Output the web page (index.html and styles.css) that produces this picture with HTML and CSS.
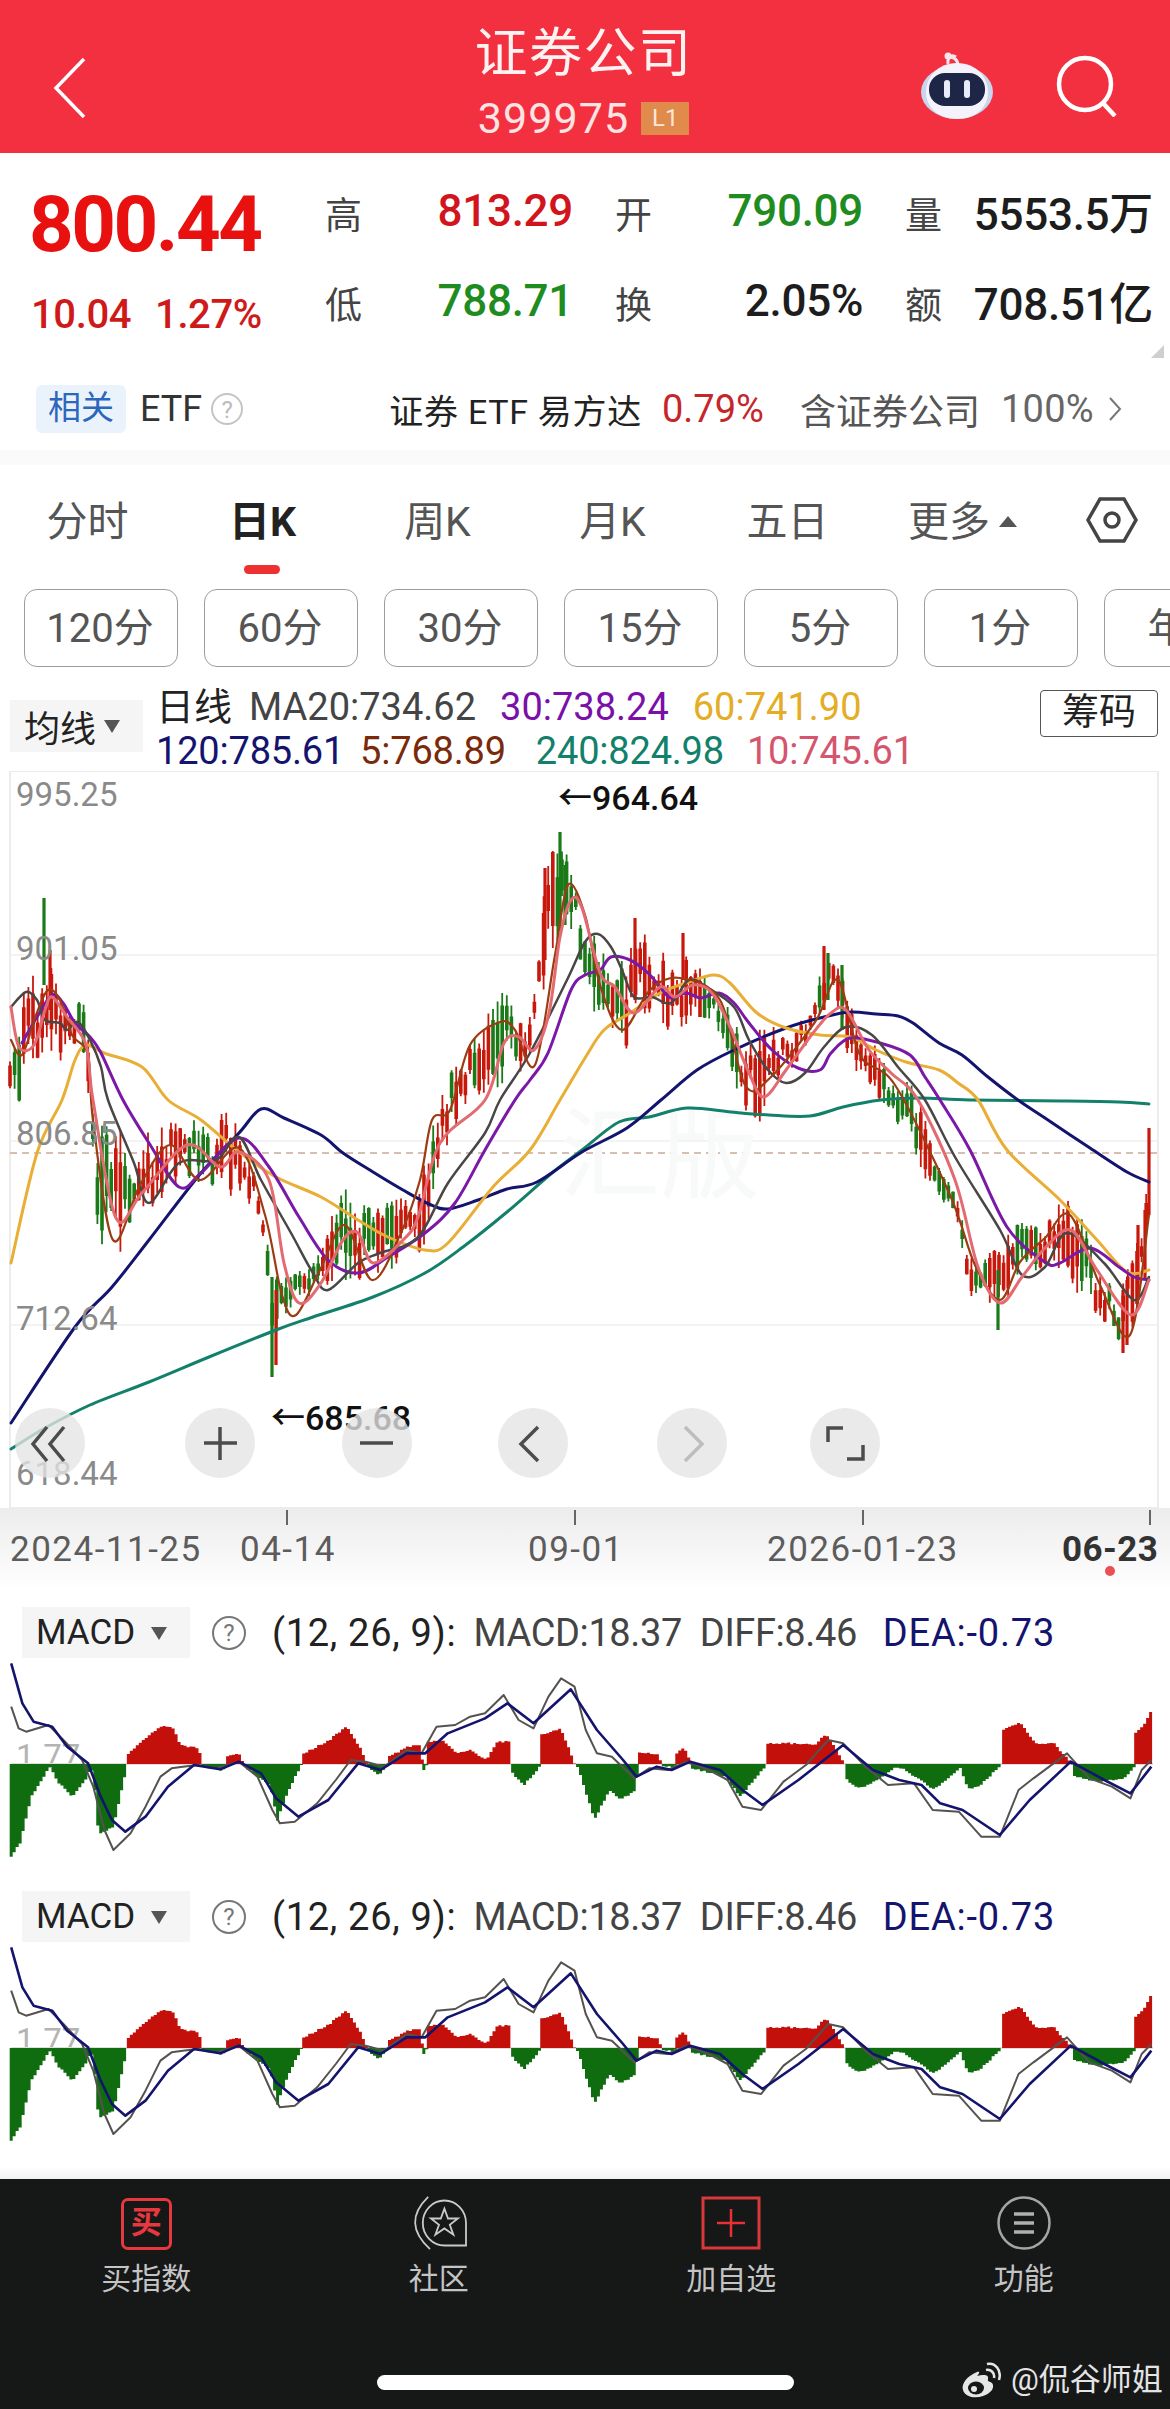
FILE: index.html
```html
<!DOCTYPE html>
<html lang="zh">
<head>
<meta charset="utf-8">
<title>证券公司</title>
<link rel="stylesheet" href="styles.css">
</head>
<body>
<div class="page">
  <header class="topbar">
    <div class="topbar-left">
      <svg class="back-icon" viewBox="0 0 34 62"><path d="M31 2 L3 31 L31 60"/></svg>
    </div>
    <div class="topbar-title">
      <div class="title">证券公司</div>
      <div class="code-row"><span class="code">399975</span><span class="badge">L1</span></div>
    </div>
    <div class="topbar-right">
      <svg class="robot-icon" viewBox="0 0 72 68">
        <path class="robot-ant" d="M27 12 C26 5 31 2 35 5"/>
        <circle class="robot-dot" cx="27" cy="4" r="3.5"/>
        <path class="robot-ant" d="M27 6 C33 4 37 8 37 14"/>
        <ellipse class="robot-ear" cx="36" cy="40" rx="36" ry="27"/>
        <path class="robot-head" d="M36 11 C56 11 67 26 67 40 C67 56 54 67 36 67 C18 67 5 56 5 40 C5 26 16 11 36 11 Z"/>
        <rect class="robot-face" x="8" y="21" width="56" height="33" rx="16"/>
        <rect class="robot-eye" x="23" y="28" width="6" height="18" rx="3"/>
        <rect class="robot-eye" x="43" y="28" width="6" height="18" rx="3"/>
      </svg>
      <svg class="search-icon" viewBox="0 0 62 62"><circle cx="29" cy="29" r="26"/><path d="M46 47 L59 61"/></svg>
    </div>
  </header>

  <section class="quote">
    <div class="quote-main">
      <div class="price">800.44</div>
      <div class="change"><span>10.04</span><span>1.27%</span></div>
    </div>
    <div class="stats">
      <div class="stat"><span class="stat-label">高</span><span class="stat-value up">813.29</span></div>
      <div class="stat"><span class="stat-label">开</span><span class="stat-value down">790.09</span></div>
      <div class="stat"><span class="stat-label">量</span><span class="stat-value">5553.5万</span></div>
      <div class="stat"><span class="stat-label">低</span><span class="stat-value down">788.71</span></div>
      <div class="stat"><span class="stat-label">换</span><span class="stat-value">2.05%</span></div>
      <div class="stat"><span class="stat-label">额</span><span class="stat-value">708.51亿</span></div>
    </div>
    <span class="corner-mark"></span>
    <div class="etf-row">
      <div class="etf-left">
        <span class="etf-chip">相关</span>
        <span class="etf-name">ETF</span>
        <span class="help-dot light">?</span>
      </div>
      <div class="etf-right">
        <span class="etf-fund">证券 ETF 易方达</span>
        <span class="etf-rate">0.79%</span>
        <span class="etf-hold">含证券公司</span>
        <span class="etf-pct">100%</span>
        <svg class="etf-arrow" viewBox="0 0 14 26"><path d="M2 2 L12 13 L2 24"/></svg>
      </div>
    </div>
  </section>

  <div class="divider"></div>

  <nav class="tabs">
    <span class="tab">分时</span>
    <span class="tab tab-active">日K</span>
    <span class="tab">周K</span>
    <span class="tab">月K</span>
    <span class="tab">五日</span>
    <span class="tab">更多<i class="tab-caret"></i></span>
    <svg class="hex-icon" viewBox="0 0 52 46"><path d="M14 2 H38 L50 23 L38 44 H14 L2 23 Z"/><circle cx="26" cy="23" r="7"/></svg>
  </nav>

  <div class="periods">
    <span class="period">120分</span>
    <span class="period">60分</span>
    <span class="period">30分</span>
    <span class="period">15分</span>
    <span class="period">5分</span>
    <span class="period">1分</span>
    <span class="period">年K</span>
  </div>

  <div class="legend">
    <div class="ma-chip"><span>均线</span><i class="caret-down"></i></div>
    <div class="legend-lines">
      <div class="legend-row legend-row-top"><span class="legend-head">日线</span><span class="c-gray">MA20:734.62</span><span class="c-purple">30:738.24</span><span class="c-orange">60:741.90</span></div>
      <div class="legend-row"><span class="c-navy">120:785.61</span><span class="c-brown legend-five">5:768.89</span><span class="c-teal">240:824.98</span><span class="c-pink">10:745.61</span></div>
    </div>
    <span class="chips-btn">筹码</span>
  </div>

  <svg class="chart" viewBox="0 771 1170 819">
    <defs>
      <linearGradient id="stripFade" x1="0" y1="0" x2="0" y2="1">
        <stop offset="0" stop-color="#ececec"/>
        <stop offset="1" stop-color="#ffffff"/>
      </linearGradient>
    </defs>
    <rect class="axis-strip" x="0" y="1508" width="1170" height="82"/>
    <rect class="frame" x="10" y="771" width="1148" height="737"/>
    <path class="grid" d="M10 955 H1158 M10 1141 H1158 M10 1325 H1158"/>
    <path class="grid-dash" d="M10 1153 H1158"/>
    <text class="watermark" x="560" y="1190">汇版</text>

    <g id="candles"></g>

    <polyline class="ln ma240" points="11,1449 45,1428 90,1405 149,1382 209,1357 276,1330 313,1317 373,1297 425,1273 463,1247 507,1212 552,1173 582,1150 619,1122 649,1117 687,1108 731,1112 769,1115 810,1116 843,1107 881,1100 920,1098 970,1100 1060,1101 1119,1102 1149,1104"/>
    <polyline class="ln ma120" points="11,1423 75,1327 112,1287 149,1240 201,1173 239,1133 261,1109 284,1118 321,1135 343,1153 373,1172 403,1190 429,1204 448,1209 478,1200 507,1189 537,1182 582,1152 627,1128 661,1100 697,1070 734,1050 786,1028 824,1017 850,1012 876,1014 898,1016 913,1023 939,1043 962,1055 988,1077 1018,1100 1045,1118 1090,1148 1127,1172 1149,1182"/>
    <polyline class="ln ma60" points="11,1263 37,1153 62,1100 75,1060 86,1045 104,1053 142,1067 168,1100 201,1120 239,1152 276,1177 321,1197 358,1220 388,1237 425,1250 448,1243 493,1187 530,1150 560,1100 585,1058 604,1030 630,1013 660,993 689,982 714,975 730,983 757,1013 786,1028 820,1035 850,1037 876,1050 906,1062 939,1070 958,1083 978,1100 1007,1150 1060,1200 1097,1240 1127,1272 1149,1270"/>
    <polyline class="ln ma30" points="22,1043 37,1017 52,995 63,1003 75,1023 90,1037 101,1053 123,1100 149,1143 179,1187 201,1173 239,1138 269,1167 299,1217 328,1260 358,1273 388,1257 425,1233 455,1203 485,1150 515,1100 530,1080 548,1053 571,990 585,975 600,970 611,957 630,960 648,973 660,987 671,998 686,993 701,998 719,993 734,1003 749,1023 772,1050 798,1068 820,1070 831,1053 850,1038 880,1043 910,1055 925,1077 940,1100 970,1150 1007,1227 1045,1262 1060,1263 1090,1248 1119,1267 1134,1277 1149,1280"/>
    <polyline class="ln ma20" points="11,1007 26,992 37,1000 45,1020 60,1023 67,1030 78,1022 90,1040 101,1067 108,1100 134,1163 149,1203 179,1163 216,1160 239,1137 261,1180 291,1233 313,1273 328,1290 358,1263 380,1253 418,1237 448,1183 485,1133 500,1100 530,1053 567,980 585,942 598,934 611,947 622,970 634,997 652,997 671,1003 689,980 708,988 734,1007 749,1040 768,1070 786,1083 805,1073 824,1047 846,1027 872,1035 898,1067 925,1100 955,1157 1000,1230 1022,1275 1045,1267 1067,1233 1104,1263 1134,1300 1149,1277"/>
    <polyline class="ln ma5" points="11,1040 22,1055 36,1015 48,990 60,1000 72,1035 88,1055 93,1120 113,1240 140,1185 170,1145 200,1180 239,1148 265,1215 282,1295 296,1315 320,1270 345,1225 372,1280 400,1235 420,1180 432,1120 450,1110 470,1045 500,1022 515,1030 535,1065 555,955 568,885 585,915 600,985 622,1030 650,990 680,978 720,1000 745,1085 770,1078 815,1022 838,980 860,1055 895,1085 950,1195 975,1265 1000,1300 1020,1262 1045,1238 1070,1215 1100,1285 1130,1335 1149,1215"/>
    <polyline class="ln ma10" points="11,1007 19,1047 34,1045 45,1010 52,997 67,1017 86,1045 93,1100 116,1218 142,1193 187,1145 220,1167 239,1152 269,1180 284,1263 299,1303 321,1283 343,1240 358,1233 373,1263 403,1240 418,1217 440,1143 485,1100 504,1043 519,1037 534,1050 549,1013 560,937 571,900 582,908 600,973 615,987 634,1013 660,987 675,997 693,985 712,993 730,1027 749,1073 764,1097 786,1070 813,1033 831,1013 846,1010 869,1050 891,1073 918,1100 955,1180 978,1267 1000,1303 1022,1277 1045,1248 1071,1230 1097,1270 1131,1315 1149,1280"/>

    <text class="price-tick" x="16" y="806">995.25</text>
    <text class="price-tick" x="16" y="960">901.05</text>
    <text class="price-tick" x="16" y="1145">806.85</text>
    <text class="price-tick" x="16" y="1330">712.64</text>
    <text class="price-tick" x="16" y="1485">618.44</text>
    <text class="extreme" x="558" y="810">←964.64</text>
    <text class="extreme" x="271" y="1430">←685.68</text>

    <g class="nav-btns">
      <circle cx="50" cy="1443" r="35"/>
      <circle cx="220" cy="1443" r="35"/>
      <circle cx="377" cy="1443" r="35"/>
      <circle cx="533" cy="1443" r="35"/>
      <circle cx="692" cy="1443" r="35"/>
      <circle cx="845" cy="1443" r="35"/>
    </g>
    <path class="nav-glyph" d="M47 1427 L33 1444 L47 1461 M64 1427 L50 1444 L64 1461"/>
    <path class="nav-glyph" d="M204 1443 H237 M220 1427 V1460"/>
    <path class="nav-glyph" d="M360 1443 H393"/>
    <path class="nav-glyph" d="M538 1427 L521 1444 L538 1461"/>
    <path class="nav-glyph off" d="M685 1427 L702 1444 L685 1461"/>
    <path class="nav-glyph" d="M843 1428 H828 V1442 M847 1459 H863 V1445"/>

    <path class="tick" d="M287 1510 V1525 M575 1510 V1525 M863 1510 V1525 M1150 1510 V1525"/>
    <text class="date" x="10" y="1561">2024-11-25</text>
    <text class="date" x="240" y="1561">04-14</text>
    <text class="date" x="528" y="1561">09-01</text>
    <text class="date" x="767" y="1561">2026-01-23</text>
    <text class="date date-now" x="1062" y="1561">06-23</text>
    <circle class="now-dot" cx="1110" cy="1571" r="5"/>
  </svg>

  <section class="macd">
    <div class="macd-head">
      <div class="macd-chip"><span>MACD</span><i class="caret-down small"></i></div>
      <span class="help-dot">?</span>
      <span class="macd-args">(12, 26, 9):</span>
      <span class="macd-val c-gray">MACD:18.37</span>
      <span class="macd-val c-gray">DIFF:8.46</span>
      <span class="macd-val macd-dea-text c-navy">DEA:-0.73</span>
    </div>
    <span class="macd-zero-label">1.77</span>
    <svg class="macd-plot" viewBox="0 204 1568 648" preserveAspectRatio="none">
      <g id="macd-art">
        <path class="macd-zero" d="M15 522 H1545"/>
        <g id="macd-hist"></g>
        <polyline class="macd-diff" points="15,350 25,415 35,425 65,405 85,450 110,510 125,590 140,720 152,780 175,730 195,650 215,560 230,535 245,530 265,525 290,535 320,515 345,560 365,660 375,700 395,695 425,640 450,570 470,510 490,515 515,530 545,480 565,490 585,410 610,405 630,380 650,370 675,315 695,390 715,415 735,320 752,265 770,290 785,420 800,490 820,500 850,565 870,535 895,540 920,515 950,540 975,570 995,650 1020,660 1050,575 1080,525 1110,450 1130,460 1160,530 1190,585 1225,580 1250,660 1285,665 1315,740 1340,740 1365,600 1385,565 1430,490 1460,565 1490,590 1515,625 1530,540 1543,510"/>
        <polyline class="macd-dea" points="15,220 30,340 45,395 70,410 90,470 118,520 135,620 150,690 168,725 195,680 225,590 260,525 295,538 320,515 350,550 370,625 400,680 440,630 480,520 510,540 545,490 570,490 600,430 650,385 680,340 715,400 765,298 800,420 835,510 853,560 880,530 900,540 925,515 965,540 995,600 1022,645 1070,570 1130,465 1170,540 1205,570 1235,585 1260,640 1290,660 1340,735 1380,630 1435,515 1480,570 1515,610 1543,530"/>
      </g>
    </svg>
  </section>

  <section class="macd">
    <div class="macd-head">
      <div class="macd-chip"><span>MACD</span><i class="caret-down small"></i></div>
      <span class="help-dot">?</span>
      <span class="macd-args">(12, 26, 9):</span>
      <span class="macd-val c-gray">MACD:18.37</span>
      <span class="macd-val c-gray">DIFF:8.46</span>
      <span class="macd-val macd-dea-text c-navy">DEA:-0.73</span>
    </div>
    <span class="macd-zero-label">1.77</span>
    <svg class="macd-plot" viewBox="0 204 1568 648" preserveAspectRatio="none">
      <use href="#macd-art"/>
    </svg>
  </section>

  <div class="bottom-gap"></div>

  <footer class="bottombar">
    <div class="actions">
      <div class="action">
        <span class="buy-icon">买</span>
        <span class="action-label">买指数</span>
      </div>
      <div class="action">
        <svg class="action-icon" viewBox="0 0 64 60"><path class="community" d="M62 55 H38 A24 25 0 1 1 62 30 Z"/><path class="community" d="M20 1 Q-10 30 22 59"/><path class="community" d="M38 14 L42 25 L53 25 L44 32 L48 43 L38 36 L28 43 L32 32 L23 25 L34 25 Z"/></svg>
        <span class="action-label">社区</span>
      </div>
      <div class="action">
        <svg class="action-icon" viewBox="0 0 60 54"><rect class="add-box" x="2" y="2" width="56" height="50"/><path class="add-plus" d="M16 27 H44 M30 13 V41"/></svg>
        <span class="action-label">加自选</span>
      </div>
      <div class="action">
        <svg class="action-icon" viewBox="0 0 56 54"><circle class="menu-ring" cx="28" cy="27" r="25.5"/><path class="menu-lines" d="M18 18 H38 M18 27 H38 M18 36 H38"/></svg>
        <span class="action-label">功能</span>
      </div>
    </div>
    <div class="home-bar"></div>
    <div class="weibo">
      <svg class="weibo-logo" viewBox="0 0 40 38">
        <path class="wb-body" d="M16 11 C6 15 0 23 2 29 C4 36 14 38 22 35 C31 32 34 26 31 22 C29 20 26 21 27 18 C28 14 24 13 16 15 C19 12 19 10 16 11 Z"/>
        <ellipse class="wb-eye" cx="15" cy="27" rx="8" ry="6.5"/>
        <circle class="wb-pupil" cx="13" cy="28" r="3"/>
        <path class="wb-wave" d="M25 9 C30 8 34 12 33 17 M26 3 C34 1 41 9 38 19"/>
      </svg>
      <span>@侃谷师姐</span>
    </div>
  </footer>
</div>
<script src="chart.js"></script>
</body>
</html>
```

FILE: styles.css
```css
* { box-sizing: border-box; }
html, body { margin: 0; padding: 0; background: #fff; }
body { font-family: Roboto, "Noto Sans CJK SC", sans-serif; color: #222; }
i { display: inline-block; font-style: normal; }
.page { width: 1170px; height: 2409px; overflow: hidden; }

/* top bar */
.topbar { height: 153px; background: #f2303f; display: grid; grid-template-columns: 1fr auto 1fr; color: #fff; }
.topbar-left { padding: 57px 0 0 53px; }
.back-icon { width: 34px; height: 62px; display: block; fill: none; stroke: #fff; stroke-width: 3.5; }
.topbar-title { display: flex; flex-direction: column; align-items: center; padding-top: 19px; margin-left: -3px; }
.title { font-size: 53px; line-height: 70px; height: 70px; letter-spacing: 1.5px; color: #fdf2f2; }
.code-row { display: flex; align-items: center; gap: 12px; height: 52px; margin-top: 3px; }
.code { font-size: 43px; letter-spacing: 1.1px; color: #fbe4e4; }
.badge { width: 48px; height: 33px; background: #e08b4b; color: #fde8d8; font-size: 24px; display: flex; align-items: center; justify-content: center; }
.topbar-right { display: flex; justify-content: flex-end; align-items: flex-start; gap: 63px; padding: 52px 52px 0 0; }
.robot-icon { width: 72px; height: 68px; display: block; }
.robot-ant { fill: none; stroke: #f5e6ee; stroke-width: 3; }
.robot-dot { fill: #f5e6ee; }
.robot-ear { fill: #c9d4ef; }
.robot-head { fill: #f4f3fb; }
.robot-face { fill: #1d2647; }
.robot-eye { fill: #e8ecfa; }
.search-icon { width: 62px; height: 62px; display: block; fill: none; stroke: #fff; stroke-width: 4.5; margin-top: 3px; }

/* quote */
.quote { height: 297px; position: relative; padding: 0 0 0 29px; display: grid; grid-template-columns: 296px 1fr; grid-template-rows: 192px 1fr; }
.quote-main { padding-top: 32px; }
.price { font-size: 78px; line-height: 80px; font-weight: 700; letter-spacing: -2.5px; color: #e8110f; }
.change { display: flex; justify-content: flex-start; gap: 24px; font-size: 40px; line-height: 46px; margin-top: 27px; letter-spacing: -.4px; font-weight: 500; color: #cf1a1a; padding-left: 2px; }
.stats { display: grid; grid-template-columns: 248px 248px 248px; column-gap: 42px; grid-auto-rows: 90px; padding-top: 34px; }
.stat { display: flex; justify-content: space-between; align-items: center; height: 48px; }
.stat-label { font-size: 37px; color: #444; padding-top: 3px; }
.stat-value { font-size: 44px; font-weight: 500; letter-spacing: -.3px; color: #1d1d1d; white-space: nowrap; }
.up { color: #d2141c; }
.down { color: #1f8c1f; }
.corner-mark { position: absolute; right: 6px; top: 192px; width: 0; height: 0; border-left: 13px solid transparent; border-bottom: 13px solid #cfcfcf; }
.etf-row { grid-column: 1 / 3; display: flex; justify-content: space-between; align-items: flex-start; padding: 40px 48px 0 7px; }
.etf-left { display: flex; align-items: center; gap: 14px; height: 48px; }
.etf-chip { width: 90px; height: 48px; background: #eaf2fb; border-radius: 6px; color: #2c66bd; font-size: 33px; text-align: center; line-height: 46px; }
.etf-name { font-size: 36px; color: #333; }
.help-dot { width: 34px; height: 34px; border-radius: 50%; border: 2px solid #777; color: #777; font-size: 24px; line-height: 30px; text-align: center; flex: none; }
.help-dot.light { border-color: #c4c4c4; color: #bbb; width: 32px; height: 32px; margin-left: -5px; }
.etf-right { display: flex; align-items: center; height: 48px; font-size: 36px; white-space: nowrap; }
.etf-fund { color: #222; font-size: 34px; margin-right: 20px; letter-spacing: .7px; }
.etf-rate { color: #c6262a; font-size: 38px; margin-right: 36px; }
.etf-hold { color: #555; margin-right: 21px; }
.etf-pct { color: #666; font-size: 38px; margin-right: 14px; letter-spacing: .3px; }
.etf-arrow { width: 14px; height: 26px; fill: none; stroke: #777; stroke-width: 2; }

.divider { height: 15px; background: #fafafa; }

/* tabs */
.tabs { height: 115px; display: grid; grid-template-columns: repeat(6, 175px) 1fr; align-items: start; padding-top: 30px; }
.tab { position: relative; text-align: center; font-size: 41px; line-height: 54px; color: #555; white-space: nowrap; }
.tab-active { font-weight: 700; color: #222; }
.tab-active::after { content: ""; position: absolute; left: 69px; top: 70px; width: 36px; height: 9px; border-radius: 5px; background: #ee3030; }
.tab-caret { width: 0; height: 0; border-left: 9px solid transparent; border-right: 9px solid transparent; border-bottom: 11px solid #555; margin: 0 0 8px 9px; vertical-align: middle; }
.hex-icon { width: 52px; height: 46px; justify-self: center; margin-top: 2px; margin-left: 4px; fill: none; stroke: #444; stroke-width: 3.5; }

/* period buttons */
.periods { margin-top: 9px; height: 78px; padding-left: 24px; display: flex; gap: 26px; overflow: hidden; }
.period { flex: 0 0 154px; height: 78px; border: 1.5px solid #9c9c9c; border-radius: 13px; text-align: center; line-height: 77px; font-size: 40px; color: #555; padding-right: 2px; white-space: nowrap; }

/* legend */
.legend { height: 104px; display: flex; align-items: flex-start; padding: 20px 12px 0 10px; }
.ma-chip { width: 133px; height: 52px; margin-top: 13px; background: #f5f5f5; display: flex; align-items: center; gap: 8px; padding-left: 14px; font-size: 36px; color: #222; }
.caret-down { width: 0; height: 0; border-left: 8px solid transparent; border-right: 8px solid transparent; border-top: 13px solid #555; }
.legend-lines { flex: 1; margin-left: 13px; font-size: 38px; line-height: 44px; margin-top: -2px; letter-spacing: -.2px; }
.legend-row { display: flex; gap: 23px; height: 44px; white-space: nowrap; }
.legend-row-top { gap: 24px; letter-spacing: 0; }
.legend-head { color: #222; margin-right: -7px; }
.legend-five { margin-left: -7px; margin-right: 7px; }
.c-gray { color: #444; }
.c-purple { color: #7a10a8; }
.c-orange { color: #e5ac25; }
.c-navy { color: #14146e; }
.c-brown { color: #7a2a0a; }
.c-teal { color: #12806a; }
.c-pink { color: #d4566e; }
.chips-btn { width: 118px; height: 47px; margin-top: 3px; border: 1.5px solid #555; border-radius: 4px; text-align: center; font-size: 37px; line-height: 43px; color: #222; }

/* main chart */
.chart { display: block; width: 1170px; height: 819px; }
.axis-strip { fill: url(#stripFade); }
.frame { fill: #fff; stroke: #ececec; stroke-width: 2; }
.grid { fill: none; stroke: #f0f0f0; stroke-width: 1.5; }
.grid-dash { fill: none; stroke: #c9a99a; stroke-width: 1.5; stroke-dasharray: 7 5; }
.watermark { font-size: 100px; fill: #f8f9f9; }
.ln { fill: none; stroke-linejoin: round; stroke-linecap: round; stroke-width: 3; }
.ma240 { stroke: #12806a; }
.ma120 { stroke: #14146e; }
.ma60 { stroke: #e8ae35; }
.ma30 { stroke: #7a18a8; }
.ma20 { stroke: #4a4646; stroke-width: 2.5; }
.ma5 { stroke: #9c3c12; stroke-width: 2.2; }
.ma10 { stroke: #e46a72; }
.price-tick { font-size: 33px; fill: #8a8a8a; }
.extreme { font-size: 34px; font-weight: 500; fill: #111; }
.nav-btns circle { fill: #e4e4e4; fill-opacity: .78; }
.nav-glyph { fill: none; stroke: #4c4c4c; stroke-width: 3.5; }
.nav-glyph.off { stroke: #bdbdbd; }
.tick { fill: none; stroke: #666; stroke-width: 2; }
.date { font-size: 35px; fill: #5c5c5c; letter-spacing: 1.5px; }
.date-now { fill: #333; font-weight: 700; letter-spacing: .4px; }
.now-dot { fill: #ea4f55; }

/* macd panels */
.macd { position: relative; height: 284px; }
.macd-head { height: 68px; display: flex; align-items: center; padding: 17px 0 0 22px; font-size: 38px; white-space: nowrap; }
.macd-chip { width: 168px; height: 51px; background: #f5f5f5; display: flex; align-items: center; gap: 16px; padding-left: 14px; color: #222; font-size: 35px; margin-right: 22px; }
.caret-down.small { margin-top: 2px; }
.macd-args { color: #222; margin-left: 26px; margin-right: 17px; letter-spacing: .7px; }
.macd-val { margin-right: 18px; letter-spacing: -.4px; }
.macd-dea-text { margin-left: 8px; letter-spacing: .8px; }
.macd-zero-label { position: absolute; left: 16px; top: 147px; font-size: 33px; color: #b4b4b4; }
.macd-plot { position: relative; display: block; width: 1170px; height: 216px; }
.macd-zero { fill: none; stroke: #e3dcdc; stroke-width: 2; vector-effect: non-scaling-stroke; }
.macd-diff { fill: none; stroke: #55524f; stroke-width: 2; vector-effect: non-scaling-stroke; stroke-linejoin: round; }
.macd-dea { fill: none; stroke: #14146e; stroke-width: 2.6; vector-effect: non-scaling-stroke; stroke-linejoin: round; }

.bottom-gap { height: 21px; background: linear-gradient(#fff 40%, #f2f2f2); }

/* bottom bar */
.bottombar { position: relative; height: 230px; background: #161717; }
.actions { display: grid; grid-template-columns: repeat(4, 1fr); padding-top: 17px; }
.action { display: flex; flex-direction: column; align-items: center; }
.action-icon { width: 60px; height: 54px; display: block; }
.action-label { font-size: 30px; line-height: 40px; margin-top: 9px; color: #c4c4c4; }
.buy-icon { width: 51px; height: 52px; margin-top: 2px; border: 3px solid #e6393f; border-radius: 7px; color: #e6393f; font-size: 31px; font-weight: 700; line-height: 44px; text-align: center; }
.community { fill: none; stroke: #c9c9c9; stroke-width: 2; }
.add-box { fill: none; stroke: #d9383c; stroke-width: 3; }
.add-plus { fill: none; stroke: #ea2f36; stroke-width: 2.5; }
.menu-ring { fill: none; stroke: #a5a5a5; stroke-width: 2.5; }
.menu-lines { fill: none; stroke: #b0b0b0; stroke-width: 3.5; }
.home-bar { width: 417px; height: 15px; border-radius: 8px; background: #fff; margin: 76px auto 0; }
.weibo { position: absolute; left: 961px; top: 179px; display: flex; align-items: center; gap: 10px; font-size: 31px; line-height: 44px; color: #e4e4e4; white-space: nowrap; }
.weibo-logo { width: 40px; height: 38px; flex: none; }
.wb-body { fill: #e6e6e6; }
.wb-eye { fill: #161717; }
.wb-pupil { fill: #e6e6e6; }
.wb-wave { fill: none; stroke: #e6e6e6; stroke-width: 2.5; }
```

FILE: chart.js
```js
(function () {
  var NS = 'http://www.w3.org/2000/svg';
  var seed = 20240611;
  function rnd() { seed = (seed * 1103515245 + 12345) & 0x7fffffff; return seed / 0x7fffffff; }
  function interp(pts, x) {
    if (x <= pts[0][0]) return pts[0][1];
    for (var i = 1; i < pts.length; i++) {
      if (x <= pts[i][0]) {
        var a = pts[i - 1], b = pts[i];
        return a[1] + (b[1] - a[1]) * (x - a[0]) / (b[0] - a[0]);
      }
    }
    return pts[pts.length - 1][1];
  }
  function path(parent, d, color, width) {
    var p = document.createElementNS(NS, 'path');
    p.setAttribute('d', d);
    p.setAttribute('fill', 'none');
    p.setAttribute('stroke', color);
    p.setAttribute('stroke-width', width);
    parent.appendChild(p);
  }

  /* turn the moving-average polylines into smooth curves */
  function smooth(poly) {
    var nums = poly.getAttribute('points').trim().split(/[\s,]+/).map(Number), p = [];
    for (var i = 0; i < nums.length; i += 2) p.push([nums[i], nums[i + 1]]);
    var d = 'M' + p[0][0] + ' ' + p[0][1];
    for (var k = 0; k < p.length - 1; k++) {
      var a = p[Math.max(k - 1, 0)], b = p[k], c = p[k + 1], e = p[Math.min(k + 2, p.length - 1)];
      d += 'C' + (b[0] + (c[0] - a[0]) / 6).toFixed(1) + ' ' + (b[1] + (c[1] - a[1]) / 6).toFixed(1) + ' ' +
           (c[0] - (e[0] - b[0]) / 6).toFixed(1) + ' ' + (c[1] - (e[1] - b[1]) / 6).toFixed(1) + ' ' + c[0] + ' ' + c[1];
    }
    var out = document.createElementNS(NS, 'path');
    out.setAttribute('class', poly.getAttribute('class'));
    out.setAttribute('d', d);
    poly.parentNode.replaceChild(out, poly);
  }
  Array.prototype.forEach.call(document.querySelectorAll('polyline.ln'), smooth);

  /* price envelope of the candlesticks, read off the chart */
  var hi = [[8,1070],[15,1040],[22,973],[28,985],[37,965],[41,960],[51,950],[60,1000],[75,1000],[83,1003],[88,1015],[92,1085],[97,1110],[112,1110],[130,1150],[150,1130],[164,1120],[190,1117],[215,1125],[228,1103],[240,1130],[257,1180],[268,1240],[272,1277],[285,1275],[306,1273],[325,1240],[343,1167],[347,1197],[375,1210],[403,1193],[414,1203],[425,1160],[430,1100],[437,1088],[450,1070],[466,1048],[480,1030],[500,985],[515,1000],[526,1028],[535,990],[541,903],[545,868],[552,850],[566,850],[571,867],[585,913],[600,947],[613,953],[625,950],[635,918],[645,933],[650,957],[665,950],[683,933],[695,960],[708,980],[730,1007],[745,1050],[767,1017],[788,1030],[809,1008],[820,970],[830,950],[842,965],[850,1000],[865,1033],[880,1052],[913,1083],[925,1117],[937,1173],[955,1187],[968,1253],[985,1260],[1007,1220],[1045,1227],[1063,1193],[1082,1217],[1104,1273],[1119,1300],[1134,1223],[1142,1230],[1149,1170]];
  var lo = [[8,1090],[15,1130],[25,1075],[37,1070],[50,1050],[65,1068],[80,1030],[86,1095],[92,1150],[97,1233],[112,1267],[130,1240],[149,1213],[180,1180],[216,1190],[240,1200],[261,1217],[268,1300],[272,1340],[280,1330],[295,1300],[321,1292],[345,1280],[373,1280],[400,1265],[425,1250],[432,1200],[440,1163],[455,1130],[470,1100],[490,1090],[515,1082],[530,1063],[541,1007],[555,950],[567,923],[578,940],[584,1018],[600,1010],[615,1037],[622,1063],[635,1040],[652,1012],[671,1035],[697,1017],[714,1023],[727,1047],[736,1100],[745,1110],[761,1123],[770,1090],[779,1085],[798,1060],[815,1030],[827,993],[840,1010],[850,1070],[876,1090],[884,1118],[905,1130],[933,1197],[950,1205],[962,1240],[970,1300],[985,1310],[998,1320],[1015,1283],[1045,1273],[1075,1290],[1101,1322],[1123,1345],[1134,1333],[1149,1213]];
  var wickRed = '', wickGreen = '', bodyRed = '', bodyGreen = '';
  var red = true;
  for (var x = 10; x <= 1150; x += 4.6) {
    var H = interp(hi, x), L = interp(lo, x), R = L - H;
    var top = H + Math.pow(rnd(), 1.6) * R * 0.5, bot = L - Math.pow(rnd(), 1.6) * R * 0.5;
    if (bot - top < 14) { top -= 7; bot += 7; }
    var bt = top + rnd() * (bot - top) * 0.35, bb = bot - rnd() * (bot - top) * 0.35;
    if (rnd() < 0.42) red = rnd() < 0.62;
    var w = 'M' + x.toFixed(1) + ' ' + top.toFixed(1) + 'V' + bot.toFixed(1);
    var b = 'M' + x.toFixed(1) + ' ' + bt.toFixed(1) + 'V' + bb.toFixed(1);
    if (red) { wickRed += w; bodyRed += b; } else { wickGreen += w; bodyGreen += b; }
  }
  var g = document.getElementById('candles');
  path(g, wickGreen, '#1a7a18', 1.8);
  path(g, bodyGreen, '#1a7a18', 3.6);
  path(g, wickRed, '#c8180c', 1.8);
  path(g, bodyRed, '#c8180c', 3.6);

  /* the sharp extremes that stand clear of the envelope: x, top, bottom, is red */
  var spikes = [
    [44, 898, 985, 0], [50, 950, 1010, 1], [272, 1277, 1377, 0], [276, 1290, 1365, 1],
    [545, 868, 960, 1], [560, 832, 930, 0], [565, 865, 925, 0], [635, 918, 1000, 1], [683, 933, 980, 1],
    [824, 946, 1010, 1], [828, 953, 1000, 0], [842, 965, 1030, 0], [998, 1270, 1330, 0],
    [1123, 1290, 1353, 1], [1127, 1280, 1345, 1], [1138, 1225, 1300, 1], [1145, 1210, 1280, 1], [1149, 1128, 1215, 1]
  ];
  spikes.forEach(function (s) {
    path(g, 'M' + s[0] + ' ' + s[1] + 'V' + s[2], s[3] ? '#c8180c' : '#1a7a18', 3.2);
  });

  /* MACD histogram outline; coordinates are in the plot's viewBox */
  var G = '#0f6d0f', Rd = '#c4100a';
  var hist = [
    [G,[[13,800],[25,760],[40,620],[65,530],[75,575],[95,620],[115,560],[120,530],[125,600],[130,735],[150,710],[168,530]]],
    [Rd,[[170,490],[190,450],[215,408],[230,415],[240,465],[265,475],[268,522]]],
    [G,[[270,530],[295,540],[302,530]]],
    [Rd,[[303,500],[318,490],[325,522]]],
    [G,[[326,530],[360,585],[370,690],[385,600],[402,525]]],
    [Rd,[[405,490],[440,450],[462,408],[480,470],[490,522]]],
    [G,[[492,530],[505,555],[519,525]]],
    [Rd,[[520,500],[545,470],[560,465],[565,522]]],
    [G,[[566,540],[570,525]]],
    [Rd,[[572,455],[590,450],[610,490],[628,480],[650,510],[665,455],[680,455],[683,522]]],
    [G,[[685,550],[700,585],[722,530]]],
    [Rd,[[724,435],[750,415],[768,522]]],
    [G,[[772,530],[795,688],[815,600],[830,630],[850,600],[853,530]]],
    [Rd,[[855,485],[880,495],[885,522]]],
    [G,[[887,530],[903,530]]],
    [Rd,[[905,490],[915,470],[925,522]]],
    [G,[[926,535],[970,560],[990,620],[1024,530]]],
    [Rd,[[1027,460],[1060,460],[1090,465],[1105,430],[1130,522]]],
    [G,[[1133,570],[1150,595],[1175,570],[1200,530],[1215,545],[1250,600],[1285,535],[1295,595],[1310,590],[1340,525]]],
    [Rd,[[1343,420],[1365,398],[1385,460],[1410,460],[1435,522]]],
    [G,[[1438,560],[1470,575],[1505,565],[1518,530]]],
    [Rd,[[1520,430],[1530,410],[1543,355]]]
  ];
  var hg = document.getElementById('macd-hist');
  hist.forEach(function (seg) {
    var pts = seg[1], d = '', a = pts[0][0], b = pts[pts.length - 1][0];
    for (var px = a; px <= b; px += 4) {
      var y = interp(pts, px) + (rnd() - 0.5) * 5;
      d += 'M' + px + ' 522V' + y.toFixed(1) + 'H' + (px + 4) + 'V522Z';
    }
    var p = document.createElementNS(NS, 'path');
    p.setAttribute('d', d);
    p.setAttribute('fill', seg[0]);
    hg.appendChild(p);
  });
})();
```
